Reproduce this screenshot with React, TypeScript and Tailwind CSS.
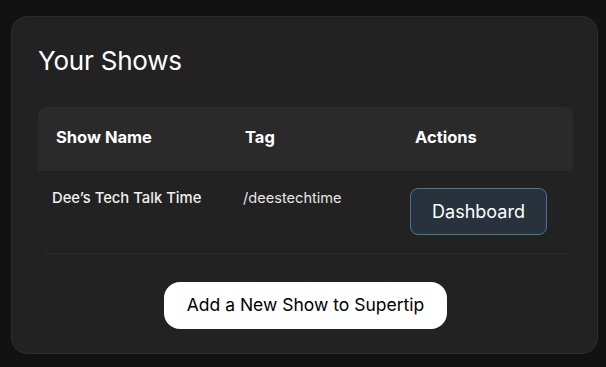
export default function App() {
  const font = { fontFamily: "Inter, 'Noto Sans', sans-serif" };
  return (
    <div className="min-h-[367px] w-[606px] bg-[#121212] pt-[16px] pl-[11px]" style={font}>
      <div className="h-[338px] w-[587px] rounded-[16px] border border-[#2c2c2c] bg-[#222222] px-[26px] pt-[28px]">
        <h1 className="text-[26px] font-normal leading-[32px] tracking-[-0.2px] text-white">Your Shows</h1>

        <div className="mt-[30px] w-[535px]">
          <div className="flex h-[64px] items-center rounded-t-[8px] bg-[#2a2a2b] pb-[3px] text-[16.5px] font-bold text-white">
            <div className="w-[189px] pl-[18px]">Show Name</div>
            <div className="w-[170px] pl-[18px]">Tag</div>
            <div className="pl-[18px]">Actions</div>
          </div>
          <div className="mx-[6px] flex h-[83px] border-b border-[#2b2b2b] pt-[18px]">
            <div className="w-[183px] pl-[8px] text-[14.8px] font-medium leading-[18px] text-[#f0f0f0]">
              Dee’s Tech Talk Time
            </div>
            <div className="w-[170px] pl-[16px] text-[14.6px] leading-[18px] text-[#e6e6e6]">/deestechtime</div>
            <div className="-mt-[1px] pl-[13px]">
              <button
                type="button"
                className="h-[47px] w-[137px] rounded-[8px] border border-[#4c7394] bg-[#27323c] text-[18px] text-white"
              >
                Dashboard
              </button>
            </div>
          </div>
        </div>

        <div className="mt-[28px] flex justify-center pl-[2px]">
          <button
            type="button"
            className="h-[47px] w-[283px] rounded-[16px] bg-white text-[17.5px] text-black"
          >
            Add a New Show to Supertip
          </button>
        </div>
      </div>
    </div>
  );
}
